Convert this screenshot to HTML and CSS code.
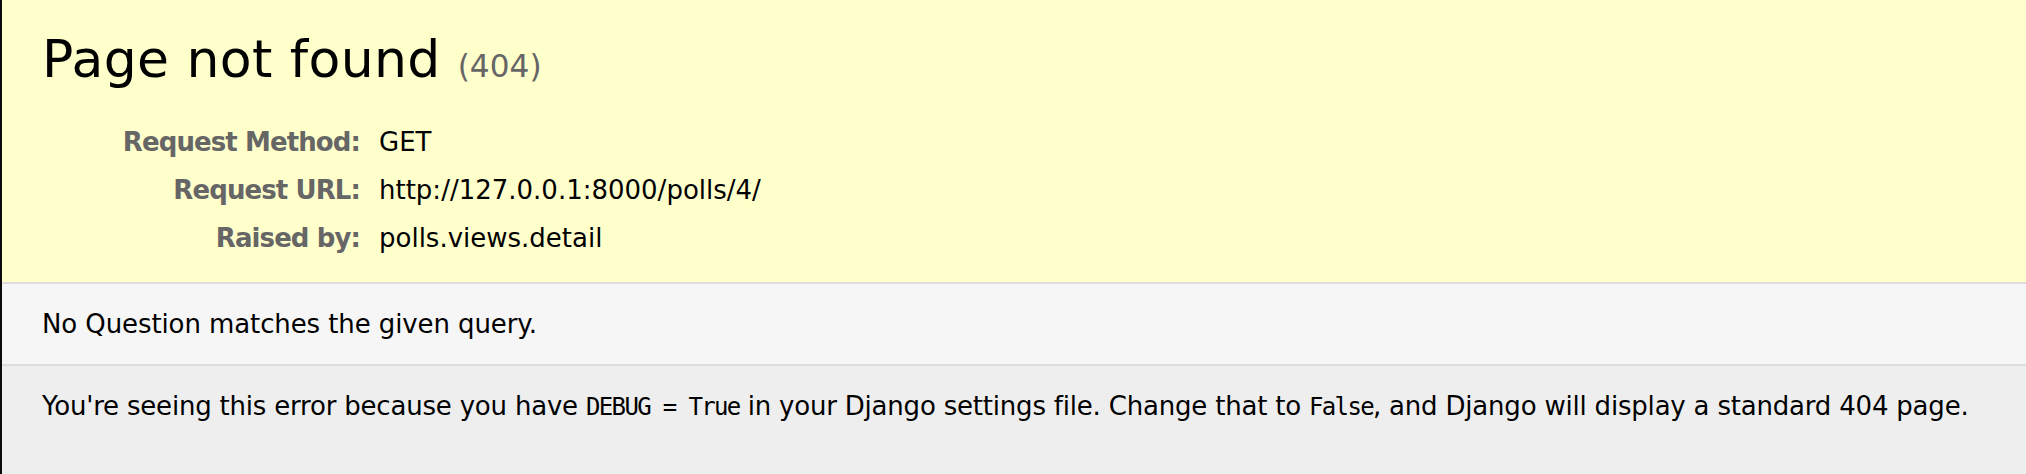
FILE: index.html
```html
<!DOCTYPE html>
<html lang="en">
<head>
<meta charset="utf-8">
<title>Page not found at /polls/4/</title>
<link rel="stylesheet" href="styles.css">
</head>
<body>
<div class="summary">
  <h1 class="title">Page not found <span class="status">(404)</span></h1>
  <table class="meta">
    <tr><th>Request Method:</th><td>GET</td></tr>
    <tr><th>Request URL:</th><td>http://127.0.0.1:8000/polls/4/</td></tr>
    <tr><th>Raised by:</th><td>polls.views.detail</td></tr>
  </table>
</div>
<div class="info">
  <p>No Question matches the given query.</p>
</div>
<div class="explanation">
  <p class="explain-text">You're seeing this error because you have <code class="mono">DEBUG = True</code> in your Django settings file. Change that to <code class="mono">False</code>, and Django will display a standard 404 page.</p>
</div>
</body>
</html>
```

FILE: styles.css
```css
html, body {
  margin: 0;
  padding: 0;
}
html {
  background: #eee;
}
body {
  font-family: "DejaVu Sans", "Liberation Sans", sans-serif;
  font-size: 26px;
  line-height: 40px;
  color: #000;
  background: #eee;
  border-left: 2px solid #0a0a0a;
  min-height: 100vh;
  box-sizing: border-box;
}
p {
  margin: 0;
}
.summary {
  background: #ffc;
  padding: 20px 40px;
  border-bottom: 2px solid #ddd;
}
.title {
  margin: 0 0 13px 0;
  font-size: 52px;
  line-height: 78px;
  font-weight: normal;
  letter-spacing: 0.4px;
}
.status {
  font-size: 31.2px;
  color: #666;
  font-weight: normal;
  letter-spacing: 0;
}
.meta {
  border: none;
  border-collapse: collapse;
  width: 100%;
}
.meta th,
.meta td {
  vertical-align: top;
  padding: 4px 6px;
}
.meta th {
  width: 312px;
  text-align: right;
  color: #666;
  padding-right: 13px;
  font-weight: bold;
  letter-spacing: -0.9px;
}
.info {
  background: #f6f6f6;
  padding: 20px 40px;
  border-bottom: 2px solid #ddd;
}
.info p {
  letter-spacing: -0.1px;
}
.explanation {
  padding: 20px 40px;
}
.explain-text {
  letter-spacing: -0.2px;
  white-space: nowrap;
}
.mono {
  font-family: "DejaVu Sans Mono", monospace;
  font-size: 24px;
  letter-spacing: -1.65px;
}
```
